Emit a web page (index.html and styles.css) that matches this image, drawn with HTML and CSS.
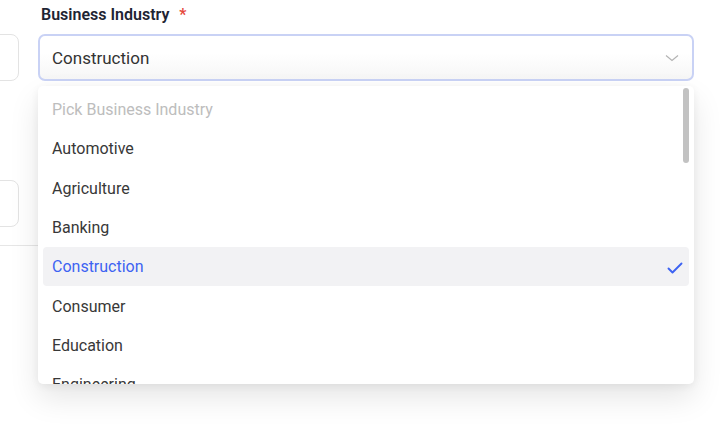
FILE: index.html
```html
<!DOCTYPE html>
<html>
<head>
<meta charset="utf-8">
<link rel="stylesheet" href="styles.css">
</head>
<body>
<div class="page">
  <div class="side">
    <div class="side-box first"></div>
    <div class="side-box second"></div>
    <div class="side-rule"></div>
  </div>
  <div class="field">
    <label class="label">Business Industry <span class="req">*</span></label>
    <div class="select">
      <span class="value">Construction</span>
      <svg class="chev" width="14" height="8" viewBox="0 0 14 8"><path d="M1 1.5 L7 6.5 L13 1.5" fill="none" stroke="#b3b3b3" stroke-width="1.2"/></svg>
    </div>
    <div class="menu">
      <div class="scroll"></div>
      <ul class="list">
        <li class="item placeholder">Pick Business Industry</li>
        <li class="item">Automotive</li>
        <li class="item">Agriculture</li>
        <li class="item">Banking</li>
        <li class="item selected">Construction
          <svg class="check" width="16" height="12" viewBox="0 0 16 12"><path d="M1.5 6.5 L5.5 10.5 L14.5 1.5" fill="none" stroke="#3d63f2" stroke-width="1.9" stroke-linecap="round" stroke-linejoin="round"/></svg>
        </li>
        <li class="item">Consumer</li>
        <li class="item">Education</li>
        <li class="item">Engineering</li>
      </ul>
    </div>
  </div>
</div>
</body>
</html>
```
FILE: styles.css
```css
* { box-sizing: border-box; }
html, body { margin: 0; padding: 0; background: #fff; }
body {
  font-family: Roboto, "Liberation Sans", Arial, sans-serif;
  width: 720px;
  height: 432px;
  overflow: hidden;
}
.page {
  display: grid;
  grid-template-columns: 20px 1fr;
  column-gap: 18px;
  padding-right: 26px;
}
.side {
  display: flex;
  flex-direction: column;
  padding-top: 34px;
}
.side-box {
  height: 47px;
  width: 220px;
  margin-left: -201px;
  border: 1px solid #e3e3e3;
  border-radius: 8px;
  background: #fff;
}
.side-box.second { margin-top: 99px; }
.side-rule {
  margin-top: 18px;
  height: 1px;
  width: 60px;
  background: #e6e6e6;
}
.field {
  position: relative;
  display: flex;
  flex-direction: column;
}
.label {
  display: block;
  height: 34px;
  padding: 5px 0 0 3px;
  font-size: 16px;
  font-weight: 600;
  color: #1e2433;
}
.req { color: #e5483b; margin-left: 6px; }
.select {
  height: 47px;
  border: 2px solid #c9d2f5;
  border-radius: 7px;
  background: linear-gradient(#ffffff 40%, #f6f6f6);
  display: flex;
  align-items: center;
  justify-content: space-between;
  padding: 0 13px 0 12px;
}
.value {
  font-size: 17px;
  color: #333;
  padding-top: 1px;
}
.chev { margin-top: 1px; }
.menu {
  position: absolute;
  top: 86px;
  left: 0;
  right: 0;
  height: 298px;
  background: #fff;
  border-radius: 5px;
  box-shadow: 0 14px 30px rgba(0, 0, 0, 0.10), 0 2px 8px rgba(0, 0, 0, 0.06);
  overflow: hidden;
  padding: 4px 5px 0 5px;
}
.scroll {
  position: absolute;
  top: 2px;
  right: 5px;
  width: 6px;
  height: 75px;
  background: #c2c2c2;
  border-radius: 3px;
}
.list {
  list-style: none;
  margin: 0;
  padding: 0;
}
.item {
  height: 39.3px;
  display: flex;
  align-items: center;
  justify-content: space-between;
  padding: 0 6px 0 9px;
  font-size: 16px;
  color: #383838;
  border-radius: 4px;
}
.item.placeholder { color: #bdbdbd; }
.item.selected {
  background: #f2f2f4;
  color: #3d63f2;
}
.check { margin-top: 2px; }
```
